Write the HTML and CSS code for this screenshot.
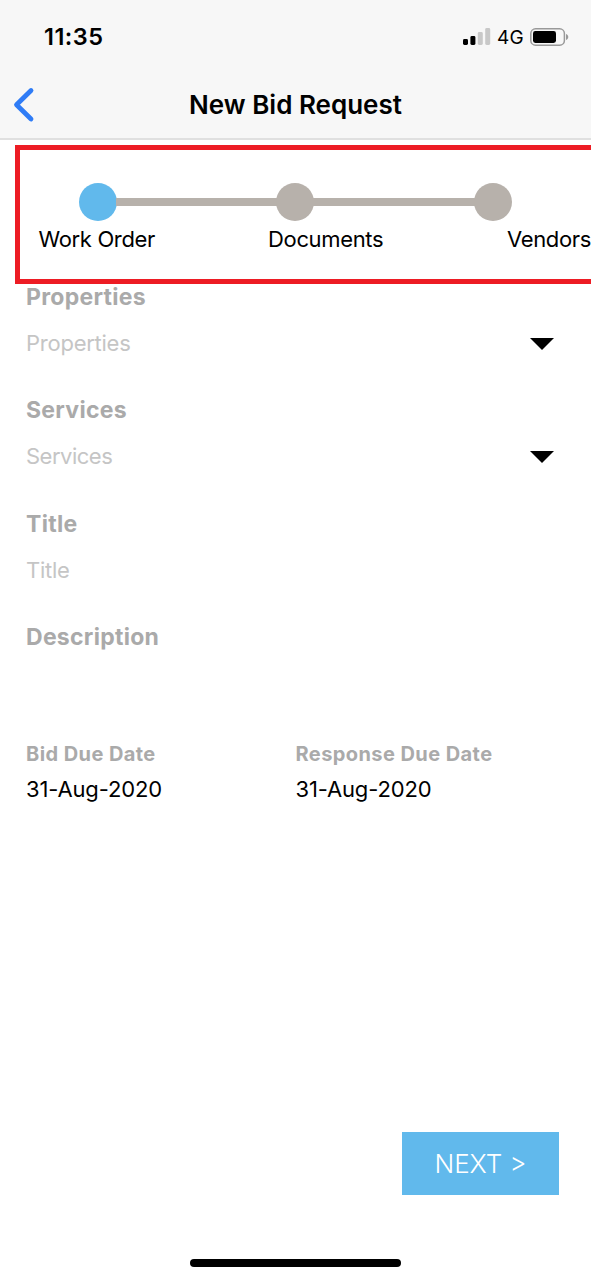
FILE: index.html
```html
<!DOCTYPE html>
<html lang="en">
<head>
<meta charset="utf-8">
<title>New Bid Request</title>
<link rel="stylesheet" href="styles.css">
</head>
<body>
<header class="top">
  <div class="status">
    <span class="clock">11:35</span>
    <svg class="signal" width="28" height="18" viewBox="0 0 28 18">
      <rect x="0" y="11" width="5" height="6" rx="1.4"/>
      <rect x="7.4" y="8" width="5" height="9" rx="1.4"/>
      <rect class="dim" x="14.8" y="4" width="5" height="13" rx="1.4"/>
      <rect class="dim" x="22.2" y="0" width="5" height="17" rx="1.4"/>
    </svg>
    <span class="network">4G</span>
    <svg class="battery" width="39" height="18" viewBox="0 0 39 18">
      <rect class="shell" x="0.8" y="0.8" width="33.6" height="16.4" rx="4.8"/>
      <rect x="3" y="3" width="23" height="12" rx="2.4"/>
      <path class="cap" d="M36 6c3 1 3 5 0 6z"/>
    </svg>
  </div>
  <div class="nav">
    <svg class="back" width="22" height="36" viewBox="0 0 22 36"><path d="M18 3.5 3.5 17.8 18 32"/></svg>
    <h1 class="heading">New Bid Request</h1>
  </div>
</header>
<main class="content">
  <section class="stepper">
    <div class="track">
      <span class="dot active"></span><span class="bar"></span><span class="dot"></span><span class="bar"></span><span class="dot"></span>
    </div>
    <div class="steps">
      <span class="work">Work Order</span><span class="docs">Documents</span><span class="vendors">Vendors</span>
    </div>
  </section>
  <form class="form">
    <div class="field">
      <label class="label">Properties</label>
      <div class="select"><span class="hint">Properties</span><svg class="caret" width="24" height="12" viewBox="0 0 24 12"><path d="M0 0h24L12 12z"/></svg></div>
    </div>
    <div class="field">
      <label class="label">Services</label>
      <div class="select"><span class="hint services">Services</span><svg class="caret" width="24" height="12" viewBox="0 0 24 12"><path d="M0 0h24L12 12z"/></svg></div>
    </div>
    <div class="field">
      <label class="label">Title</label>
      <div class="select"><span class="hint">Title</span></div>
    </div>
    <div class="field">
      <label class="label">Description</label>
    </div>
    <div class="dates">
      <div class="date"><span class="date-label">Bid Due Date</span><span class="date-value">31-Aug-2020</span></div>
      <div class="date"><span class="date-label">Response Due Date</span><span class="date-value">31-Aug-2020</span></div>
    </div>
  </form>
</main>
<footer class="footer">
  <button class="next" type="button">NEXT &gt;</button>
  <div class="home"></div>
</footer>
</body>
</html>
```
FILE: styles.css
```css
* { box-sizing: border-box; }
body {
  margin: 0;
  height: 1280px;
  display: flex;
  flex-direction: column;
  overflow: hidden;
  background: #fff;
  color: #000;
  font-family: Inter, "Liberation Sans", sans-serif;
  white-space: nowrap;
}
svg { display: block; flex: none; }
.top { height: 140px; flex: none; background: #f7f7f7; border-bottom: 2px solid #e0e0e0; }
.status { height: 73px; display: flex; align-items: center; padding-left: 44px; }
.clock { width: 419px; font-size: 23.5px; font-weight: 600; letter-spacing: 0.5px; }
.signal .dim { fill: #c8c8c8; }
.network { width: 33px; margin-left: 6px; padding-top: 1px; font-size: 19px; font-weight: 400; letter-spacing: 0.2px; }
.battery .shell { fill: none; stroke: #999; stroke-width: 1.5; }
.battery .cap { fill: #999; }
.nav { height: 63px; display: flex; align-items: center; padding-left: 13px; }
.back { fill: none; stroke: #2f7cf6; stroke-width: 4.8; stroke-linecap: round; stroke-linejoin: round; }
.heading { width: 521px; margin: 0; text-align: center; font-size: 26px; font-weight: 600; line-height: 63px; }
.content { flex: 1; }
.stepper {
  height: 139px;
  margin: 5px 0 0 15px;
  padding-top: 33px;
  border: 5px solid #ed1c24;
  border-right: 0;
}
.track { display: flex; align-items: center; padding-left: 59px; height: 38px; }
.dot { width: 38px; height: 38px; border-radius: 50%; background: #b7b1ab; flex: none; }
.dot.active { background: #61b9ec; }
.bar { width: 161.4px; height: 8px; margin: 0 -1px; background: #b7b1ab; }
.steps { display: flex; margin-top: 3px; padding-left: 18.5px; font-size: 22px; line-height: 30px; letter-spacing: -0.35px; }
.work { width: 230px; }
.docs { width: 239.5px; }
.form { padding-left: 26px; }
.field { height: 113.4px; display: flex; flex-direction: column; }
.label { font-size: 23px; font-weight: 700; line-height: 26px; letter-spacing: 0.28px; color: #aaa; }
.select { display: flex; align-items: center; justify-content: space-between; height: 30px; margin-top: 18px; padding-right: 37px; }
.hint { font-size: 22px; line-height: 30px; letter-spacing: -0.25px; color: #c5c5c5; }
.hint.services { letter-spacing: -0.5px; }
.caret { margin-top: 1px; }
.dates { display: flex; margin-top: 1px; }
.date { width: 269.5px; display: flex; flex-direction: column; gap: 5px; }
.date-label { font-size: 20px; font-weight: 700; line-height: 30px; letter-spacing: 0.42px; color: #aaa; }
.date-value { font-size: 22px; line-height: 30px; letter-spacing: -0.15px; }
.footer { flex: none; height: 148px; display: flex; flex-direction: column; }
.next {
  width: 157px;
  height: 63px;
  margin: 0 32px 0 auto;
  padding: 0;
  border: 0;
  background: #61b9ec;
  color: #fff;
  font: 300 26px/63px Inter, "Liberation Sans", sans-serif;
}
.home { width: 211px; height: 8px; margin: 64px 0 0 190px; border-radius: 4px; background: #000; }
```
